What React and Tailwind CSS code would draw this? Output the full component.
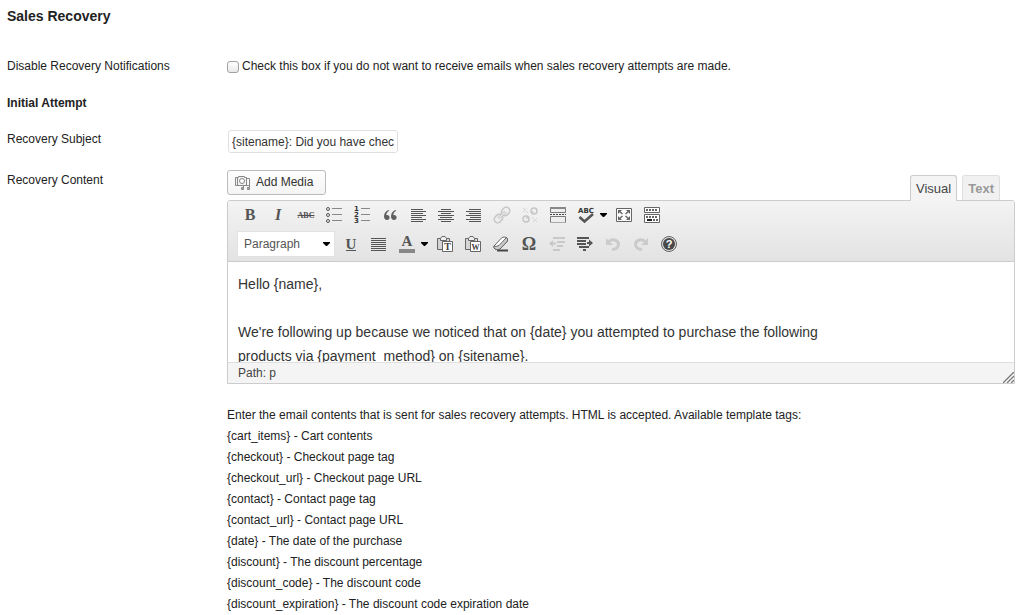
import React from "react";

const tags = [
  ["{cart_items}", "Cart contents"],
  ["{checkout}", "Checkout page tag"],
  ["{checkout_url}", "Checkout page URL"],
  ["{contact}", "Contact page tag"],
  ["{contact_url}", "Contact page URL"],
  ["{date}", "The date of the purchase"],
  ["{discount}", "The discount percentage"],
  ["{discount_code}", "The discount code"],
  ["{discount_expiration}", "The discount code expiration date"],
];

function Icon({ children, color = "#555" }) {
  return (
    <svg width="20" height="20" viewBox="0 0 20 20" fill="none" stroke={color} strokeWidth="1" aria-hidden="true">
      {children}
    </svg>
  );
}

function Tool({ label, children, disabled }) {
  return (
    <button type="button" aria-label={label} disabled={disabled} className="flex h-7 w-7 shrink-0 items-center justify-center">
      {children}
    </button>
  );
}

function Arrow({ label }) {
  return (
    <button type="button" aria-label={label} className="flex h-7 w-[10px] shrink-0 items-center justify-start">
      <svg width="7" height="4" viewBox="0 0 7 4" fill="#000" aria-hidden="true">
        <path d="M0 0h7v1L4 4H3L0 1z" />
      </svg>
    </button>
  );
}

/* Horizontal strokes given as [x1, x2, y]. */
function Lines({ rows }) {
  return (
    <Icon>
      {rows.map(([a, b, y]) => (
        <path key={y} d={"M" + a + " " + y + "H" + b} />
      ))}
    </Icon>
  );
}

const left = [[3, 15, 4.5], [3, 18, 6.5], [3, 15, 8.5], [3, 18, 10.5], [3, 14, 12.5], [3, 18, 14.5], [3, 15, 16.5]];
const center = [[5, 15, 4.5], [2, 18, 6.5], [5, 15, 8.5], [2, 18, 10.5], [4, 16, 12.5], [2, 18, 14.5], [5, 15, 16.5]];
const right = [[5, 17, 4.5], [2, 17, 6.5], [5, 17, 8.5], [2, 17, 10.5], [6, 17, 12.5], [2, 17, 14.5], [5, 17, 16.5]];
const full = [[2, 17, 4.5], [2, 17, 6.5], [2, 17, 8.5], [2, 17, 10.5], [2, 17, 12.5], [2, 17, 14.5], [2, 17, 16.5]];

function Clipboard({ letter }) {
  return (
    <Icon color="#666">
      <path fill="#d4d4d4" d="M2.500 4.500H14.500V15.500H2.500z" />
      <path fill="#eee" d="M5.500 6.500V4.500L7 2.500H10L11.500 4.500V6.500z" />
      <path fill="#fff" d="M7.500 7.500H17.500V17.500H7.500z" />
      <text x="12.500" y="16" textAnchor="middle" fill="#444" stroke="none" fontSize={letter === "W" ? "8" : "10"} fontWeight="700" fontFamily="Liberation Serif, serif">{letter}</text>
    </Icon>
  );
}

function RowOne() {
  return (
    <div className="flex h-7 items-center pl-2">
      <Tool label="Bold"><span className="font-['Liberation_Serif',serif] text-base font-bold text-[#555]">B</span></Tool>
      <Tool label="Italic"><span className="font-['Liberation_Serif',serif] text-base font-bold italic text-[#555]">I</span></Tool>
      <Tool label="Strikethrough"><span className="font-['Liberation_Serif',serif] text-[8px] font-bold text-[#4f4f4f] line-through">ABC</span></Tool>
      <Tool label="Unordered list">
        <Icon>
          <circle cx="4" cy="4" r="1.500" /><circle cx="4" cy="10" r="1.500" /><circle cx="4" cy="16" r="1.500" />
          <path stroke="#888" d="M8 3.500H18M8 9.500H18M8 15.500H18" />
        </Icon>
      </Tool>
      <Tool label="Ordered list">
        <Icon>
          <g fill="#333" stroke="none" fontSize="7" fontWeight="700" fontFamily="DejaVu Sans, sans-serif">
            <text x="2" y="6">1</text><text x="2" y="12">2</text><text x="2" y="18">3</text>
          </g>
          <path stroke="#888" d="M9 3.500H18M9 9.500H18M9 15.500H18" />
        </Icon>
      </Tool>
      <Tool label="Blockquote">
        <Icon>
          <path fill="#5f5f5f" stroke="none" d="M9 5C6 5.800 4 8 4 11.200C4 13.500 5.200 15 7 15C8.600 15 9.600 14 9.600 12.500C9.600 11 8.600 10 7.200 10C6.800 10 6.500 10 6.200 10.200C6.500 8.300 7.400 6.800 9.200 5.800zM16 5C13 5.800 11 8 11 11.200C11 13.500 12.200 15 14 15C15.600 15 16.600 14 16.600 12.500C16.600 11 15.600 10 14.200 10C13.800 10 13.500 10 13.200 10.200C13.500 8.300 14.400 6.800 16.200 5.800z" />
        </Icon>
      </Tool>
      <Tool label="Align left"><Lines rows={left} /></Tool>
      <Tool label="Align center"><Lines rows={center} /></Tool>
      <Tool label="Align right"><Lines rows={right} /></Tool>
      <Tool label="Insert link" disabled>
        <Icon color="#c6c6c6">
          <g transform="rotate(-45 10 10)">
            <rect x="0.500" y="6.500" width="9" height="7" rx="3.500" strokeWidth="1.500" /><rect x="10.500" y="6.500" width="9" height="7" rx="3.500" strokeWidth="1.500" />
            <path strokeWidth="3" d="M5 10H15" /><path stroke="#eee" d="M5 10H15" />
          </g>
        </Icon>
      </Tool>
      <Tool label="Unlink" disabled>
        <Icon color="#c6c6c6">
          <g strokeWidth="1.500">
            <circle cx="14" cy="6" r="3" /><circle cx="6" cy="14" r="3" />
            <path d="M11.500 8.500L13.500 6.500M8.500 11.500L6.500 13.500" />
          </g>
          <path strokeDasharray="1 1" d="M3 3L8 8M3 7L7 3M12 12L17 17M13 17L17 13" />
        </Icon>
      </Tool>
      <Tool label="Insert More tag">
        <Icon color="#777">
          <path fill="#ededed" d="M2.500 2.500H17.500V7.500H2.500z" />
          <path strokeWidth="2" stroke="#888" d="M2 3H18" /><path stroke="#444" strokeDasharray="2 1" d="M2 9.500H18" />
          <path fill="#ededed" d="M2.500 17V11.500H17.500V17" /><path stroke="#aaa" d="M2 17.500H18" />
        </Icon>
      </Tool>
      <Tool label="Toggle spellchecker">
        <Icon>
          <text x="10" y="8" textAnchor="middle" fill="#333" stroke="none" fontSize="7" fontWeight="700" fontFamily="DejaVu Sans, sans-serif">ABC</text>
          <path strokeWidth="2.500" d="M3.500 12L8.500 16.500L17 9" />
        </Icon>
      </Tool>
      <Arrow label="Spellchecker languages" />
      <Tool label="Fullscreen">
        <Icon color="#666">
          <path fill="#fafafa" d="M2.500 3.500H17.500V16.500H2.500z" />
          <path fill="#666" stroke="none" d="M4 5H8L4 9zM16 5H12L16 9zM4 15H8L4 11zM16 15H12L16 11z" />
          <path strokeWidth="1.500" d="M5 6L8.500 9M15 6L11.500 9M5 14L8.500 11M15 14L11.500 11" />
        </Icon>
      </Tool>
      <Tool label="Show kitchen sink">
        <Icon color="#666">
          <path fill="#fff" d="M2.500 2.500H17.500V7.500H2.500zM2.500 9.500H17.500V17.500H2.500z" />
          <path strokeWidth="2" strokeDasharray="2 1" d="M4 5H16M4 12H16" /><path stroke="#222" strokeWidth="2" d="M5 15H10" /><path strokeWidth="2" strokeDasharray="2 1" d="M11 15H16" />
        </Icon>
      </Tool>
    </div>
  );
}

function RowTwo() {
  return (
    <div className="flex h-7 items-center pl-[9px]">
      <div className="relative mr-[2px] w-[98px] shrink-0">
        <select aria-label="Format" className="h-[26px] w-full appearance-none border border-[#e2e2e2] bg-white pl-[6px] text-xs text-[#555] outline-none">
          <option>Paragraph</option>
        </select>
        <svg className="pointer-events-none absolute right-[5px] top-[11px]" width="7" height="4" viewBox="0 0 7 4" aria-hidden="true">
          <path d="M0 0h7v1L4 4H3L0 1z" />
        </svg>
      </div>
      <Tool label="Underline"><span className="border-b border-[#555] font-['Liberation_Serif',serif] text-[15px] font-bold leading-3 text-[#555]">U</span></Tool>
      <Tool label="Justify"><Lines rows={full} /></Tool>
      <Tool label="Text color">
        <Icon>
          <text x="10" y="12" textAnchor="middle" fill="#555" stroke="none" fontSize="15" fontWeight="700" fontFamily="Liberation Serif, serif">A</text>
          <path stroke="#888" strokeWidth="4" d="M2 17H18" />
        </Icon>
      </Tool>
      <Arrow label="More colors" />
      <Tool label="Paste as plain text"><Clipboard letter="T" /></Tool>
      <Tool label="Paste from Word"><Clipboard letter="W" /></Tool>
      <Tool label="Remove formatting">
        <Icon color="#666">
          <path stroke="#444" strokeWidth="2" d="M6 16.500H17" />
          <path fill="#fff" strokeLinejoin="round" d="M3 12L11 3.500Q13 2.500 15.500 3.500Q17 5 16.500 7L9 15Q6 16.500 4 15Q2.500 14 3 12z" />
          <path fill="#ccc" strokeLinejoin="round" d="M16.500 7L9 15Q6 16.500 4 15Q2.500 14 3 12Q5 13 8 11.500L15.500 3.500Q17 5 16.500 7z" />
        </Icon>
      </Tool>
      <Tool label="Insert custom character"><span className="font-['Liberation_Serif',serif] text-lg font-bold text-[#555]">Ω</span></Tool>
      <Tool label="Outdent" disabled>
        <Icon color="#c8c8c8">
          <path strokeWidth="2" d="M6 4H18M10 8H18M10 12H16M6 16H13" /><path fill="#c8c8c8" stroke="none" d="M2 9.500L6 6V8.500H9V10.500H6V13z" />
        </Icon>
      </Tool>
      <Tool label="Indent">
        <Icon>
          <path strokeWidth="2" d="M2 4H14M2 7H11M2 10H11M4 13H14" /><path strokeWidth="2" d="M8 16H11" /><path fill="#555" stroke="none" d="M18 9L14 5.500V8H12V10H14V12.500z" />
        </Icon>
      </Tool>
      <Tool label="Undo" disabled>
        <Icon color="#cbcbcb"><path strokeWidth="3" d="M6 7.500C9 4.500 15 5.500 15.500 10C15.500 13.500 12.500 15.500 9 15.500" /><path fill="#cbcbcb" stroke="none" d="M3 4V11H10z" /></Icon>
      </Tool>
      <Tool label="Redo" disabled>
        <Icon color="#cbcbcb"><path strokeWidth="3" d="M14 7.500C11 4.500 5 5.500 4.500 10C4.500 13.500 7.500 15.500 11 15.500" /><path fill="#cbcbcb" stroke="none" d="M17 4V11H10z" /></Icon>
      </Tool>
      <Tool label="Help">
        <Icon color="#666">
          <circle cx="10" cy="10" r="7.500" fill="#ddd" /><circle cx="10" cy="10" r="6" fill="#4a4a4a" stroke="none" />
          <text x="10" y="14" textAnchor="middle" fill="#fff" stroke="none" fontSize="11" fontWeight="700" fontFamily="Liberation Sans, sans-serif">?</text>
        </Icon>
      </Tool>
    </div>
  );
}

export default function App() {
  return (
    <main className="bg-white pl-[7px] pr-[14px] font-['Liberation_Sans',Arial,sans-serif] text-xs leading-[21px] text-[#222]">
      <h3 className="pt-[6px] text-sm font-bold leading-[21px]">Sales Recovery</h3>
      <div className="mt-[29px] grid grid-cols-[220px_minmax(0,1fr)]">
        <label htmlFor="disable">Disable Recovery Notifications</label>
        <div className="flex items-center gap-[3px]">
          <input id="disable" type="checkbox" className="h-3 w-3 shrink-0 appearance-none rounded-[3px] border border-[#a0a0a0] bg-linear-to-b from-white to-[#e8e8e8]" />
          <label htmlFor="disable">Check this box if you do not want to receive emails when sales recovery attempts are made.</label>
        </div>
      </div>
      <h4 className="mt-4 font-bold">Initial Attempt</h4>
      <div className="mt-[15px] grid grid-cols-[220px_minmax(0,1fr)]">
        <label htmlFor="subject">Recovery Subject</label>
        <div className="flex pl-px pt-px">
          <input id="subject" defaultValue="{sitename}: Did you have checkout trouble?" className="h-[23px] w-[170px] rounded-[3px] border border-[#dfdfdf] px-[3px] text-[#333] outline-none" />
        </div>
      </div>
      <div className="mt-[17px] grid grid-cols-[220px_minmax(0,1fr)]">
        <label htmlFor="content">Recovery Content</label>
        <section>
          <div className="flex items-start justify-between pr-[15px]">
            <button type="button" className="flex h-[25px] items-center gap-[5px] rounded-[3px] border border-[#bbb] bg-linear-to-b from-[#fefefe] to-[#f4f4f4] pl-[7px] pr-3 text-[#333]">
              <svg width="16" height="16" viewBox="0 0 16 16" fill="none" stroke="#888" aria-hidden="true">
                <path fill="#f2f2f2" d="M.5 2.500H3.500V1.500H9.500V2.500H11.500V10.500H.5z" />
                <circle cx="7" cy="6" r="2.500" fill="#fff" /><path d="M2.500 3V10" />
                <path d="M12 3.500H14.500V12.500M8.500 14V10.500H14.500" />
                <path fill="#aaa" d="M6.500 12.500H8.500V14.500H6.500zM12.500 12.500H14.500V14.500H12.500z" />
              </svg>
              Add Media
            </button>
            <div className="relative -mb-px flex gap-[5px] pt-[5px] text-[13px]">
              <button type="button" className="h-[26px] rounded-t-[3px] border border-b-0 border-[#ccc] bg-[#f4f4f4] px-[5px] text-[#444]">Visual</button>
              <button type="button" className="mb-px h-[25px] rounded-t-[3px] border border-b-0 border-[#dfdfdf] bg-[#f1f1f1] px-[5px] font-bold text-[#999]">Text</button>
            </div>
          </div>
          <div className="rounded-t-[3px] border border-[#ccc]">
            <div className="flex flex-col gap-px rounded-t-[2px] border-b border-[#ccc] bg-linear-to-b from-[#f3f3f3] to-[#e3e3e3] pb-[3px]">
              <RowOne />
              <RowTwo />
            </div>
            <div id="content" role="textbox" aria-multiline="true" aria-label="Recovery Content" contentEditable suppressContentEditableWarning className="h-[100px] overflow-hidden px-[10px] pt-[10px] text-sm leading-6 text-[#333] outline-none">
              <p className="mb-6">Hello {"{name}"},</p>
              <p className="max-w-[600px]">{"We're following up because we noticed that on {date} you attempted to purchase the following products via {payment_method} on {sitename}."}</p>
            </div>
            <div className="flex items-end justify-between border-t border-[#dfdfdf] bg-[#f4f4f4] pl-[10px] leading-5 text-[#444]">
              <span>Path: p</span>
              <svg width="11" height="11" viewBox="0 0 11 11" stroke="#777" strokeWidth="1.300" aria-hidden="true">
                <path stroke="#fff" d="M2 11L11 2M6 11L11 6" />
                <path d="M0 11L11 0M4 11L11 4M8 11L11 8" />
              </svg>
            </div>
          </div>
          <p className="mt-[21px]">Enter the email contents that is sent for sales recovery attempts. HTML is accepted. Available template tags:</p>
          <ul>
            {tags.map(([tag, text]) => (
              <li key={tag}>{`${tag} - ${text}`}</li>
            ))}
          </ul>
        </section>
      </div>
    </main>
  );
}
